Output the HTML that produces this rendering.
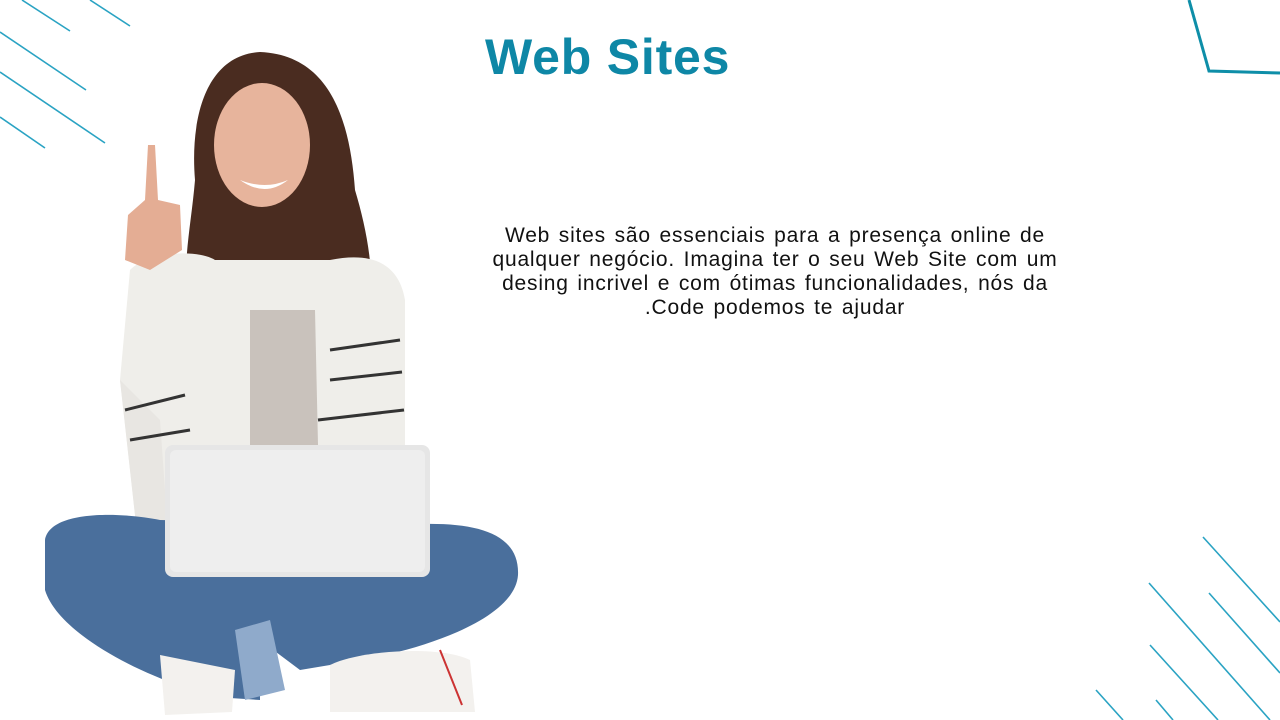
<!DOCTYPE html>
<html><head><meta charset="utf-8"><style>
html,body{margin:0;padding:0;background:#fff;width:1280px;height:720px;overflow:hidden;position:relative;font-family:"Liberation Sans",sans-serif}
h1{position:absolute;left:485px;top:28px;margin:0;font-size:50px;font-weight:bold;color:#0e87a6;letter-spacing:0.8px;line-height:58px}
.txt{position:absolute;left:440px;top:224px;width:670px;text-align:center;font-size:21px;line-height:24px;color:#111;letter-spacing:0.8px;word-spacing:2px}
svg{position:absolute;left:0;top:0}
</style></head><body>
<svg width="1280" height="720" viewBox="0 0 1280 720">
<g stroke="#2aa3c3" stroke-width="1.6" fill="none">
<line x1="22" y1="0" x2="70" y2="31"/><line x1="90" y1="0" x2="130" y2="26"/>
<line x1="0" y1="32" x2="86" y2="90"/><line x1="0" y1="72" x2="105" y2="143"/>
<line x1="0" y1="117" x2="45" y2="148"/>
<line x1="1203" y1="537" x2="1280" y2="622"/><line x1="1149" y1="583" x2="1270" y2="720"/>
<line x1="1209" y1="593" x2="1280" y2="673"/><line x1="1150" y1="645" x2="1218" y2="720"/>
<line x1="1096" y1="690" x2="1123" y2="720"/><line x1="1156" y1="700" x2="1173" y2="720"/>
</g>
<polyline points="1189,0 1209,71 1280,73" stroke="#0e8ea8" stroke-width="3" fill="none"/>
<path d="M260 52 C205 55 190 120 195 180 C190 240 175 290 200 340 L360 340 C380 300 370 240 355 190 C350 120 330 55 260 52Z" fill="#4a2c20"/>
<path d="M130 270 C150 250 200 250 215 260 L330 260 C380 250 400 270 405 300 L405 450 L140 560 L120 380Z" fill="#efeeea"/>
<path d="M250 310 L315 310 L318 445 L250 445Z" fill="#c9c2bc"/>
<ellipse cx="262" cy="145" rx="48" ry="62" fill="#e7b49c"/>
<path d="M240 180 Q265 198 288 180 Q265 190 240 180Z" fill="#fff"/>
<path d="M148 145 L155 145 L158 200 L180 205 L182 250 L150 270 L125 260 L128 215 L145 200Z" fill="#e4ad94"/>
<path d="M120 380 L140 560 L170 560 L160 420Z" fill="#e8e6e2"/>
<g stroke="#333" stroke-width="3"><line x1="125" y1="410" x2="185" y2="395"/><line x1="130" y1="440" x2="190" y2="430"/><line x1="330" y1="350" x2="400" y2="340"/><line x1="330" y1="380" x2="402" y2="372"/><line x1="318" y1="420" x2="404" y2="410"/></g>
<path d="M45 540 C50 510 120 512 160 520 L400 525 C470 520 520 530 518 575 C515 620 420 650 360 660 L300 670 L260 640 L260 700 L230 698 C170 690 60 640 45 590Z" fill="#4a6f9c"/>
<path d="M235 630 L270 620 L285 690 L245 700Z" fill="#8faacb"/>
<rect x="165" y="445" width="265" height="132" rx="8" fill="#e6e6e6"/>
<rect x="170" y="450" width="255" height="122" rx="6" fill="#eeeeee"/>
<path d="M160 655 L235 670 L232 712 L165 715Z" fill="#f3f1ee"/>
<path d="M330 665 C360 650 440 645 470 660 L475 712 L330 712Z" fill="#f3f1ee"/>
<path d="M440 650 L462 705" stroke="#c33" stroke-width="2"/>
</svg>
<h1>Web Sites</h1>
<div class="txt">Web sites são essenciais para a presença online de<br>qualquer negócio. Imagina ter o seu Web Site com um<br>desing incrivel e com ótimas funcionalidades, nós da<br>.Code podemos te ajudar</div>
</body></html>
